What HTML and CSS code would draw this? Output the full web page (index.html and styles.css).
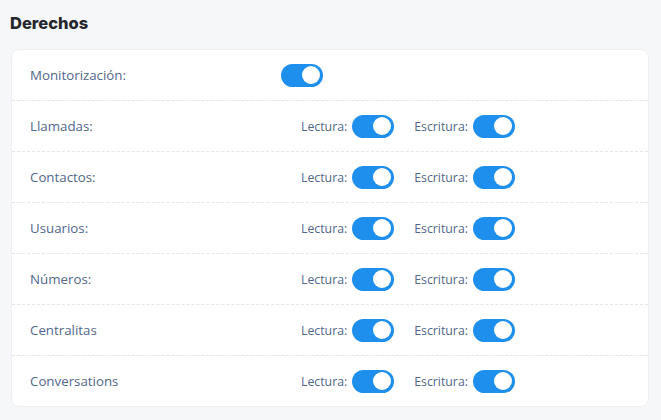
FILE: index.html
```html
<!DOCTYPE html>
<html lang="es">
<head>
<meta charset="utf-8">
<link rel="stylesheet" href="styles.css">
</head>
<body>
<h2 class="title">Derechos</h2>
<div class="card">
  <div class="row">
    <span class="label">Monitorización:</span>
    <div class="controls single"><span class="switch"><span class="knob"></span></span></div>
  </div>
  <div class="row">
    <span class="label">Llamadas:</span>
    <div class="controls">
      <span class="sub">Lectura:</span><span class="switch"><span class="knob"></span></span>
      <span class="sub second">Escritura:</span><span class="switch"><span class="knob"></span></span>
    </div>
  </div>
  <div class="row">
    <span class="label">Contactos:</span>
    <div class="controls">
      <span class="sub">Lectura:</span><span class="switch"><span class="knob"></span></span>
      <span class="sub second">Escritura:</span><span class="switch"><span class="knob"></span></span>
    </div>
  </div>
  <div class="row">
    <span class="label">Usuarios:</span>
    <div class="controls">
      <span class="sub">Lectura:</span><span class="switch"><span class="knob"></span></span>
      <span class="sub second">Escritura:</span><span class="switch"><span class="knob"></span></span>
    </div>
  </div>
  <div class="row">
    <span class="label">Números:</span>
    <div class="controls">
      <span class="sub">Lectura:</span><span class="switch"><span class="knob"></span></span>
      <span class="sub second">Escritura:</span><span class="switch"><span class="knob"></span></span>
    </div>
  </div>
  <div class="row">
    <span class="label">Centralitas</span>
    <div class="controls">
      <span class="sub">Lectura:</span><span class="switch"><span class="knob"></span></span>
      <span class="sub second">Escritura:</span><span class="switch"><span class="knob"></span></span>
    </div>
  </div>
  <div class="row">
    <span class="label">Conversations</span>
    <div class="controls">
      <span class="sub">Lectura:</span><span class="switch"><span class="knob"></span></span>
      <span class="sub second">Escritura:</span><span class="switch"><span class="knob"></span></span>
    </div>
  </div>
</div>
</body>
</html>
```
FILE: styles.css
```css
html, body {
  margin: 0;
  padding: 0;
  background: #f6f7f9;
}
body {
  padding: 12px 12px 0 10px;
  font-family: "Open Sans", "Liberation Sans", sans-serif;
}
.title {
  margin: 0 0 15px 0;
  font-family: Inter, "Liberation Sans", sans-serif;
  font-weight: 800;
  font-size: 16.5px;
  line-height: 22px;
  color: #26272d;
}
.card {
  background: #fff;
  border-radius: 8px;
  border: 1px solid #eef0f4;
  margin-left: 1px;
  width: 636px;
}
.row {
  display: flex;
  align-items: center;
  height: 50px;
  border-bottom: 1px dashed #e3e5e9;
  padding-left: 18px;
}
.row:last-child {
  border-bottom: none;
}
.label {
  width: 251px;
  font-size: 13.3px;
  color: #52678a;
}
.controls {
  display: flex;
  align-items: center;
  margin-left: 20px;
}
.controls.single {
  margin-left: 0;
}
.sub {
  font-size: 12.3px;
  color: #52678a;
  margin-right: 5px;
}
.sub.second {
  margin-left: 20px;
}
.switch {
  position: relative;
  display: inline-block;
  width: 42px;
  height: 23px;
  border-radius: 12px;
  background: #1f8fee;
}
.knob {
  position: absolute;
  right: 3px;
  top: 2.5px;
  width: 18px;
  height: 18px;
  border-radius: 50%;
  background: #fff;
}
```
